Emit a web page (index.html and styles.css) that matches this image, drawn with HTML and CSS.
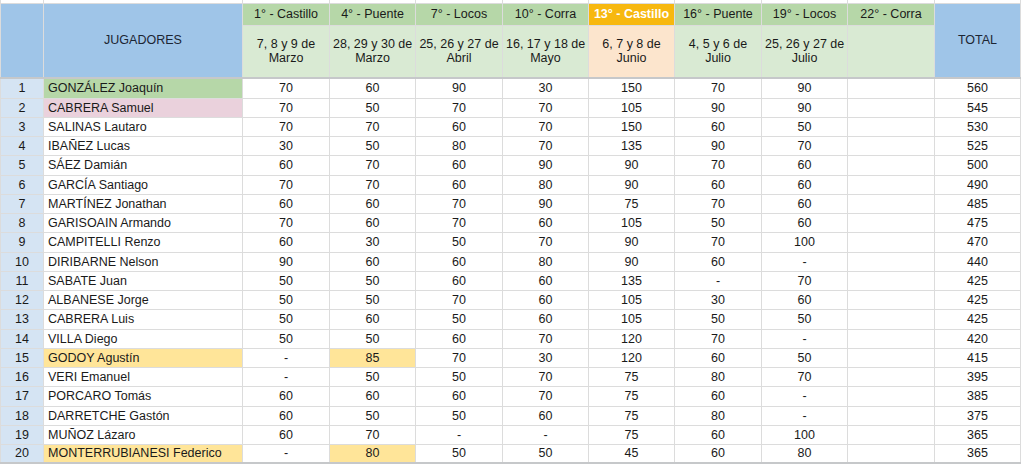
FILE: index.html
```html
<!DOCTYPE html>
<html lang="es">
<head>
<meta charset="utf-8">
<title>Ranking</title>
<link rel="stylesheet" href="styles.css">
</head>
<body>
<table class="sheet">
  <colgroup>
    <col class="c-num"><col class="c-name">
    <col class="c-a"><col class="c-b"><col class="c-a"><col class="c-b"><col class="c-b">
    <col class="c-a"><col class="c-b"><col class="c-a"><col class="c-b">
  </colgroup>
  <thead>
    <tr class="strip"><td></td><td></td><td></td><td></td><td></td><td></td><td></td><td></td><td></td><td></td><td></td></tr>
    <tr class="h-title">
      <th class="blue" rowspan="2"></th>
      <th class="blue" rowspan="2">JUGADORES</th>
      <th class="g1">1° - Castillo</th>
      <th class="g1">4° - Puente</th>
      <th class="g1">7° - Locos</th>
      <th class="g1">10° - Corra</th>
      <th class="orange">13° - Castillo</th>
      <th class="g1">16° - Puente</th>
      <th class="g1">19° - Locos</th>
      <th class="g1">22° - Corra</th>
      <th class="blue" rowspan="2">TOTAL</th>
    </tr>
    <tr class="h-date">
      <th class="g2">7, 8 y 9 de<br>Marzo</th>
      <th class="g2">28, 29 y 30 de<br>Marzo</th>
      <th class="g2">25, 26 y 27 de<br>Abril</th>
      <th class="g2">16, 17 y 18 de<br>Mayo</th>
      <th class="peach">6, 7 y 8 de<br>Junio</th>
      <th class="g2">4, 5 y 6 de<br>Julio</th>
      <th class="g2">25, 26 y 27 de<br>Julio</th>
      <th class="g2"></th>
    </tr>
  </thead>
  <tbody>
    <tr><td class="n">1</td><td class="name hl-green">GONZÁLEZ Joaquín</td><td>70</td><td>60</td><td>90</td><td>30</td><td>150</td><td>70</td><td>90</td><td></td><td>560</td></tr>
    <tr><td class="n">2</td><td class="name hl-pink">CABRERA Samuel</td><td>70</td><td>50</td><td>70</td><td>70</td><td>105</td><td>90</td><td>90</td><td></td><td>545</td></tr>
    <tr><td class="n">3</td><td class="name">SALINAS Lautaro</td><td>70</td><td>70</td><td>60</td><td>70</td><td>150</td><td>60</td><td>50</td><td></td><td>530</td></tr>
    <tr><td class="n">4</td><td class="name">IBAÑEZ Lucas</td><td>30</td><td>50</td><td>80</td><td>70</td><td>135</td><td>90</td><td>70</td><td></td><td>525</td></tr>
    <tr><td class="n">5</td><td class="name">SÁEZ Damián</td><td>60</td><td>70</td><td>60</td><td>90</td><td>90</td><td>70</td><td>60</td><td></td><td>500</td></tr>
    <tr><td class="n">6</td><td class="name">GARCÍA Santiago</td><td>70</td><td>70</td><td>60</td><td>80</td><td>90</td><td>60</td><td>60</td><td></td><td>490</td></tr>
    <tr><td class="n">7</td><td class="name">MARTÍNEZ Jonathan</td><td>60</td><td>60</td><td>70</td><td>90</td><td>75</td><td>70</td><td>60</td><td></td><td>485</td></tr>
    <tr><td class="n">8</td><td class="name">GARISOAIN Armando</td><td>70</td><td>60</td><td>70</td><td>60</td><td>105</td><td>50</td><td>60</td><td></td><td>475</td></tr>
    <tr><td class="n">9</td><td class="name">CAMPITELLI Renzo</td><td>60</td><td>30</td><td>50</td><td>70</td><td>90</td><td>70</td><td>100</td><td></td><td>470</td></tr>
    <tr><td class="n">10</td><td class="name">DIRIBARNE Nelson</td><td>90</td><td>60</td><td>60</td><td>80</td><td>90</td><td>60</td><td>-</td><td></td><td>440</td></tr>
    <tr><td class="n">11</td><td class="name">SABATE Juan</td><td>50</td><td>50</td><td>60</td><td>60</td><td>135</td><td>-</td><td>70</td><td></td><td>425</td></tr>
    <tr><td class="n">12</td><td class="name">ALBANESE Jorge</td><td>50</td><td>50</td><td>70</td><td>60</td><td>105</td><td>30</td><td>60</td><td></td><td>425</td></tr>
    <tr><td class="n">13</td><td class="name">CABRERA Luis</td><td>50</td><td>60</td><td>50</td><td>60</td><td>105</td><td>50</td><td>50</td><td></td><td>425</td></tr>
    <tr><td class="n">14</td><td class="name">VILLA Diego</td><td>50</td><td>50</td><td>60</td><td>70</td><td>120</td><td>70</td><td>-</td><td></td><td>420</td></tr>
    <tr><td class="n">15</td><td class="name hl-yellow">GODOY Agustín</td><td>-</td><td class="hl-yellow">85</td><td>70</td><td>30</td><td>120</td><td>60</td><td>50</td><td></td><td>415</td></tr>
    <tr><td class="n">16</td><td class="name">VERI Emanuel</td><td>-</td><td>50</td><td>50</td><td>70</td><td>75</td><td>80</td><td>70</td><td></td><td>395</td></tr>
    <tr><td class="n">17</td><td class="name">PORCARO Tomás</td><td>60</td><td>60</td><td>60</td><td>70</td><td>75</td><td>60</td><td>-</td><td></td><td>385</td></tr>
    <tr><td class="n">18</td><td class="name">DARRETCHE Gastón</td><td>60</td><td>50</td><td>50</td><td>60</td><td>75</td><td>80</td><td>-</td><td></td><td>375</td></tr>
    <tr><td class="n">19</td><td class="name">MUÑOZ Lázaro</td><td>60</td><td>70</td><td>-</td><td>-</td><td>75</td><td>60</td><td>100</td><td></td><td>365</td></tr>
    <tr><td class="n">20</td><td class="name hl-yellow">MONTERRUBIANESI Federico</td><td>-</td><td class="hl-yellow">80</td><td>50</td><td>50</td><td>45</td><td>60</td><td>80</td><td></td><td>365</td></tr>
  </tbody>
</table>
</body>
</html>
```

FILE: styles.css
```css
html, body {
  margin: 0;
  padding: 0;
  background: #ffffff;
}

.sheet {
  table-layout: fixed;
  border-collapse: collapse;
  width: 1021px;
  font-family: "Liberation Sans", Arial, sans-serif;
  font-size: 12.5px;
  color: #1a1a1a;
}

.c-num { width: 43px; }
.c-name { width: 199px; }
.c-a { width: 87px; }
.c-b { width: 86px; }

.sheet td,
.sheet th {
  border: 1px solid #dcdcdc;
  padding: 0 3px;
  text-align: center;
  vertical-align: middle;
  white-space: nowrap;
  overflow: hidden;
  font-weight: normal;
  line-height: 14px;
}

.strip { height: 3px; }
.strip td { border-top: 0; padding: 0; line-height: 0; }

.h-title { height: 22px; }
.h-date { height: 53px; }
.h-date th { border-bottom: 2px solid #c6c8ca; }
.sheet th.blue { border-bottom: 2px solid #c6c8ca; }

.blue { background: #9fc5e8; color: #1c2633; }
.g1 { background: #b6d7a8; }
.g2 { background: #d9ead3; }
.orange { background: #f7b80f; color: #ffffff; font-weight: bold !important; }
.peach { background: #fce5cd; }

tbody tr { height: 19px; }
tbody tr:nth-child(4n+1) { height: 20px; }

.n { background: #d5e4f3; }
.sheet td.name { text-align: left; padding-left: 4px; }

.hl-green { background: #b6d7a8; }
.hl-pink { background: #ead1dc; }
.hl-yellow { background: #ffe599; }

tbody tr:last-child td { border-bottom: 2px solid #c6c8ca; }
```
